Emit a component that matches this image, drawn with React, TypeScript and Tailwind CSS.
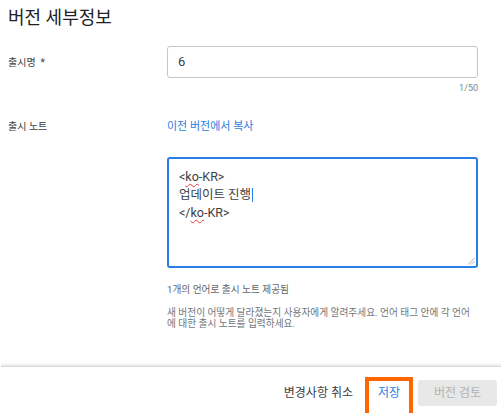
import React from "react";

export default function App() {
  const font = { fontFamily: 'Roboto, "Noto Sans CJK KR", sans-serif' };
  return (
    <div className="w-[502px] h-[413px] bg-white overflow-hidden flex flex-col [&>*]:shrink-0" style={font}>
      <div className="h-[35px] flex items-center pl-[8px]">
        <h1 className="text-[18px] leading-[20px] text-[#202124]">버전 세부정보</h1>
      </div>

      <div className="mt-[11px] grid grid-cols-[167px_311px]">
        <div className="pl-[8px] flex items-center text-[10px] text-[#3c4043]">출시명&nbsp;&nbsp;*</div>
        <div className="h-[32px] border border-[#c6c6c6] rounded-[3px] flex items-center pl-[10px] text-[13px] text-[#3c4043]">
          6
        </div>
        <div />
        <div className="mt-[4px] text-right text-[9px] leading-[12px] text-[#80868b]">1/50</div>
      </div>

      <div className="mt-[26px] grid grid-cols-[167px_311px]">
        <div className="pl-[8px] text-[10px] leading-[14px] text-[#3c4043]">출시 노트</div>
        <div className="text-[11px] leading-[14px] text-[#2a7de1]">이전 버전에서 복사</div>
      </div>

      <div className="mt-[23px] grid grid-cols-[167px_311px]">
        <div />
        <div>
          <div className="relative h-[111px] border-2 border-[#2b7de9] rounded-[3px] pl-[10px] pt-[9px] text-[12.5px] leading-[18px] text-[#3c4043]">
            <div>
              &lt;<span className="underline decoration-wavy decoration-[#e53935] decoration-1 underline-offset-2">ko</span>-KR&gt;
            </div>
            <div className="flex items-center">
              업데이트 진행<span className="inline-block w-[1px] h-[14px] bg-[#2b7de9] ml-[1px]" />
            </div>
            <div>
              &lt;/<span className="underline decoration-wavy decoration-[#e53935] decoration-1 underline-offset-2">ko</span>-KR&gt;
            </div>
            <svg className="absolute right-[1px] bottom-[1px]" width="8" height="8" viewBox="0 0 8 8">
              <line x1="7.5" y1="1" x2="1" y2="7.5" stroke="#999" strokeWidth="0.8" />
              <line x1="7.5" y1="4" x2="4" y2="7.5" stroke="#999" strokeWidth="0.8" />
            </svg>
          </div>
          <div className="mt-[16px] text-[9.7px] leading-[12px] text-[#5f6368]">1개의 언어로 출시 노트 제공됨</div>
          <div className="mt-[11px] text-[9.7px] leading-[11px] text-[#70757a] whitespace-nowrap">
            <div>새 버전이 어떻게 달라졌는지 사용자에게 알려주세요. 언어 태그 안에 각 언어</div>
            <div>에 대한 출시 노트를 입력하세요.</div>
          </div>
        </div>
      </div>

      <div className="mt-[34px] mx-[1px] h-[3px] bg-gradient-to-b from-white to-[#e6e6e6]" />
      <div className="mx-[1px] h-[1px] bg-[#d9d9d9]" />

      <div className="flex justify-end items-start pr-[5px]">
        <div className="mt-[13px] h-[26px] flex items-center text-[12px] text-[#3c4043] mr-[12px]">변경사항 취소</div>
        <div className="mt-[10px] w-[48px] h-[40px] border-4 border-[#ff6600] flex justify-center">
          <span className="text-[12px] leading-[24px] text-[#2a7de1]">저장</span>
        </div>
        <div className="mt-[13px] ml-[5px] w-[79px] h-[26px] rounded-[3px] bg-[#e8e8e8] flex items-center justify-center text-[12px] text-[#b3b3b3]">
          버전 검토
        </div>
      </div>
    </div>
  );
}
